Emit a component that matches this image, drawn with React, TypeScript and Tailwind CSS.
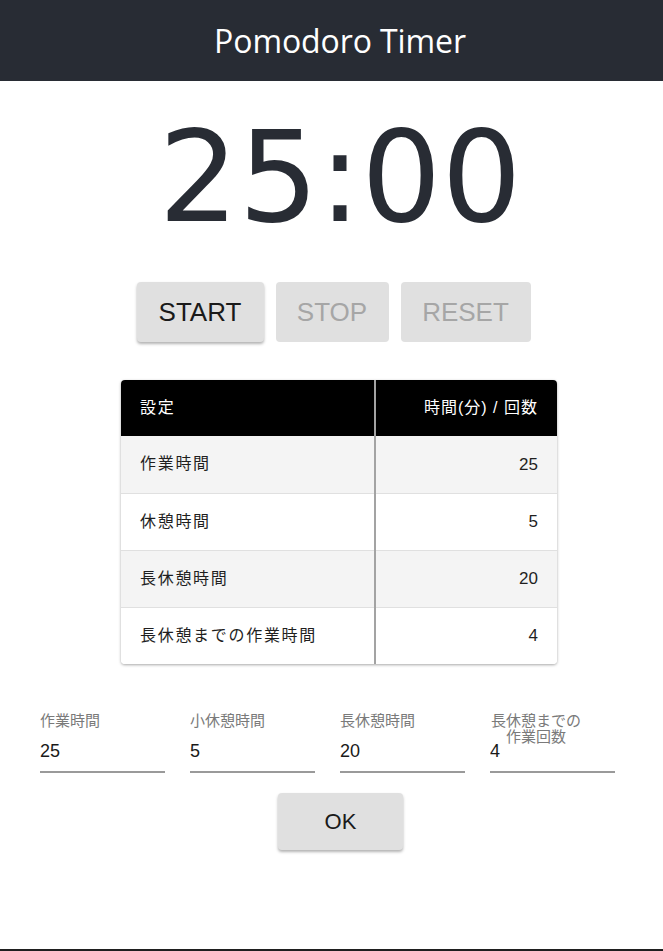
import React, { useState } from 'react';

const rows = [
  { label: '作業時間', value: 25 },
  { label: '休憩時間', value: 5 },
  { label: '長休憩時間', value: 20 },
  { label: '長休憩までの作業時間', value: 4 },
];

const jp = { fontFamily: '"Liberation Sans", "Noto Sans CJK JP", sans-serif' };

const App: React.FC = () => {
  const [work, setWork] = useState('25');
  const [rest, setRest] = useState('5');
  const [longRest, setLongRest] = useState('20');
  const [count, setCount] = useState('4');

  const fields = [
    { label: '作業時間', value: work, set: setWork },
    { label: '小休憩時間', value: rest, set: setRest },
    { label: '長休憩時間', value: longRest, set: setLongRest },
    { label: '長休憩までの作業回数', value: count, set: setCount },
  ];

  return (
    <div className="min-h-[951px] flex flex-col bg-white border-b-2 border-[#1f1f1f]" style={jp}>
      {/* Header */}
      <header className="h-[81px] bg-[#282c34] flex items-center justify-center pl-[17px]">
        <h1 className="text-white text-[32px] font-['Open_Sans',sans-serif] tracking-[-0.1px]">Pomodoro Timer</h1>
      </header>

      {/* Timer */}
      <div className="flex justify-center pt-[17px] h-[201px] pl-[17px]">
        <span className="text-[#282c34] text-[126px] leading-[160px] font-['DejaVu_Sans',sans-serif]">25:00</span>
      </div>

      {/* Controls */}
      <div className="flex justify-center gap-[12px] ml-[4px]">
        <button className="w-[127px] h-[60px] rounded-[4px] bg-[#e0e0e0] text-[26px] text-[#1a1a1a] shadow-[0_2px_3px_rgba(0,0,0,0.3)]">
          START
        </button>
        <button disabled className="w-[113px] h-[60px] rounded-[4px] bg-[#e0e0e0] text-[26px] text-[#a6a6a6]">
          STOP
        </button>
        <button disabled className="w-[130px] h-[60px] rounded-[4px] bg-[#e0e0e0] text-[26px] text-[#a6a6a6]">
          RESET
        </button>
      </div>

      {/* Settings table */}
      <div className="flex justify-center mt-[38px] pl-[15px]">
        <div className="w-[436px] rounded-[4px] overflow-hidden shadow-[0_1px_3px_rgba(0,0,0,0.35)]">
          <table className="w-full border-collapse text-[16px]">
            <thead>
              <tr className="bg-black text-white h-[56px]">
                <th className="text-left font-normal pl-[19px] w-[254px] border-r-2 border-[#a3a3a3] tracking-[1.7px]">設定</th>
                <th className="text-right font-normal pr-[19px] tracking-[1px]">時間(分) / 回数</th>
              </tr>
            </thead>
            <tbody>
              {rows.map((r, i) => (
                <tr
                  key={r.label}
                  className={`h-[57px] text-[#1f1f1f] ${i < rows.length - 1 ? 'border-b border-[#e0e0e0]' : ''} ${i % 2 === 0 ? 'bg-[#f4f4f4]' : 'bg-white'}`}
                >
                  <td className="pl-[19px] border-r-2 border-[#a3a3a3] tracking-[1.7px]">{r.label}</td>
                  <td className="text-right pr-[19px] text-[17px]">{r.value}</td>
                </tr>
              ))}
            </tbody>
          </table>
        </div>
      </div>

      {/* Inputs */}
      <div className="flex gap-[25px] pl-[40px] mt-[46px]">
        {fields.map(f => (
          <div key={f.label} className="w-[125px] flex flex-col">
            <div className="h-[28px] relative">
              <span
                className={`absolute top-[3px] text-[15px] leading-[16px] text-[#7a7a7a] ${f.label.length > 6 ? 'left-0 w-[92px] text-center' : 'left-0 whitespace-nowrap'}`}
              >
                {f.label}
              </span>
            </div>
            <input
              value={f.value}
              onChange={e => f.set(e.target.value)}
              className="w-full h-[35px] text-[18px] text-[#1a1a1a] border-b-2 border-[#9a9a9a] outline-none pb-[6px] bg-transparent"
            />
          </div>
        ))}
      </div>

      {/* OK */}
      <div className="flex justify-center mt-[20px] pl-[18px]">
        <button className="w-[125px] h-[57px] rounded-[4px] bg-[#e0e0e0] text-[22px] text-[#1a1a1a] shadow-[0_2px_3px_rgba(0,0,0,0.3)]">
          OK
        </button>
      </div>

      <div className="flex-1" />
    </div>
  );
};

export default App;
